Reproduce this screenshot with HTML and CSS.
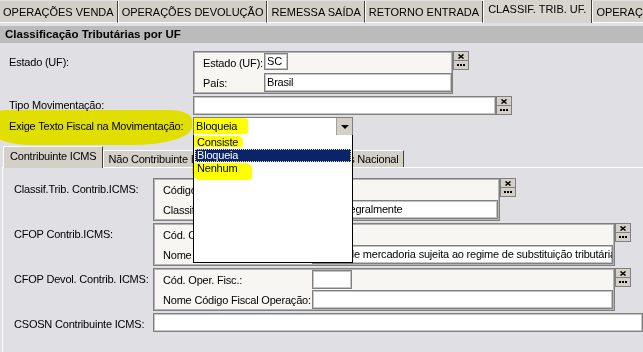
FILE: index.html
```html
<!DOCTYPE html>
<html lang="pt-BR">
<head>
  <meta charset="UTF-8">
  <title>Classificação Tributárias por UF</title>
  <link rel="stylesheet" href="styles.css">
</head>
<body>

  <div class="top-tabs">
    <div class="ttab first">OPERAÇÕES VENDA</div>
    <div class="ttab">OPERAÇÕES DEVOLUÇÃO</div>
    <div class="ttab">REMESSA SAÍDA</div>
    <div class="ttab">RETORNO ENTRADA</div>
    <div class="ttab active">CLASSIF. TRIB. UF.</div>
    <div class="ttab">OPERAÇÕES ESPECIAIS</div>
  </div>

  <div class="section-title">Classificação Tributárias por UF</div>

  <div class="form">
    <div class="row">
      <div class="lbl lbl-box">Estado (UF):</div>
      <div class="gbox gbox-uf">
        <span class="glbl">Estado (UF):</span><div class="fld fld-sc">SC</div>
        <span class="glbl">País:</span><div class="fld">Brasil</div>
      </div>
      <div class="btns">
        <div class="btn"><svg width="6" height="5" viewBox="0 0 6 5"><path d="M0.5 0.5L5.5 4.5M5.5 0.5L0.5 4.5" stroke="#000" stroke-width="1.5"/></svg></div>
        <div class="btn"><svg width="8" height="2" viewBox="0 0 8 2"><rect width="2" height="2"/><rect x="3" width="2" height="2"/><rect x="6" width="2" height="2"/></svg></div>
      </div>
    </div>

    <div class="row">
      <div class="lbl">Tipo Movimentação:</div>
      <div class="fld fld-tipo"></div>
      <div class="btns">
        <div class="btn"><svg width="6" height="5" viewBox="0 0 6 5"><path d="M0.5 0.5L5.5 4.5M5.5 0.5L0.5 4.5" stroke="#000" stroke-width="1.5"/></svg></div>
        <div class="btn"><svg width="8" height="2" viewBox="0 0 8 2"><rect width="2" height="2"/><rect x="3" width="2" height="2"/><rect x="6" width="2" height="2"/></svg></div>
      </div>
    </div>

    <div class="row">
      <div class="lbl">Exige Texto Fiscal na Movimentação:</div>
      <div class="combo">
        <span class="combo-text">Bloqueia</span>
        <span class="combo-arrow"><svg width="8" height="4" viewBox="0 0 8 4"><path d="M0 0H8L4 4Z"/></svg></span>
      </div>
    </div>
  </div>

  <div class="subtabs">
    <div class="stab active">Contribuinte ICMS</div>
    <div class="stab">Não Contribuinte ICMS</div>
    <div class="stab">Contribuinte ICMS Simples Nacional</div>
  </div>

  <div class="panel">
    <div class="row">
      <div class="lbl lbl-sub">Classif.Trib. Contrib.ICMS:</div>
      <div class="gbox gbox-a">
        <span class="glbl">Código:</span><div class="fld fld-cod"></div>
        <span class="glbl">Classificação Tributária:</span><div class="fld">Trib. integralmente</div>
      </div>
      <div class="btns">
        <div class="btn"><svg width="6" height="5" viewBox="0 0 6 5"><path d="M0.5 0.5L5.5 4.5M5.5 0.5L0.5 4.5" stroke="#000" stroke-width="1.5"/></svg></div>
        <div class="btn"><svg width="8" height="2" viewBox="0 0 8 2"><rect width="2" height="2"/><rect x="3" width="2" height="2"/><rect x="6" width="2" height="2"/></svg></div>
      </div>
    </div>

    <div class="row">
      <div class="lbl lbl-sub">CFOP Contrib.ICMS:</div>
      <div class="gbox gbox-wide">
        <span class="glbl">Cód. Oper. Fisc.:</span><div class="fld fld-cod">5405</div>
        <span class="glbl">Nome Código Fiscal Operação:</span><div class="fld">Venda de mercadoria sujeita ao regime de substituição tributária, na condição de contribuinte substituído</div>
      </div>
      <div class="btns">
        <div class="btn"><svg width="6" height="5" viewBox="0 0 6 5"><path d="M0.5 0.5L5.5 4.5M5.5 0.5L0.5 4.5" stroke="#000" stroke-width="1.5"/></svg></div>
        <div class="btn"><svg width="8" height="2" viewBox="0 0 8 2"><rect width="2" height="2"/><rect x="3" width="2" height="2"/><rect x="6" width="2" height="2"/></svg></div>
      </div>
    </div>

    <div class="row">
      <div class="lbl lbl-sub">CFOP Devol. Contrib. ICMS:</div>
      <div class="gbox gbox-wide">
        <span class="glbl">Cód. Oper. Fisc.:</span><div class="fld fld-cod"></div>
        <span class="glbl">Nome Código Fiscal Operação:</span><div class="fld"></div>
      </div>
      <div class="btns">
        <div class="btn"><svg width="6" height="5" viewBox="0 0 6 5"><path d="M0.5 0.5L5.5 4.5M5.5 0.5L0.5 4.5" stroke="#000" stroke-width="1.5"/></svg></div>
        <div class="btn"><svg width="8" height="2" viewBox="0 0 8 2"><rect width="2" height="2"/><rect x="3" width="2" height="2"/><rect x="6" width="2" height="2"/></svg></div>
      </div>
    </div>

    <div class="row">
      <div class="lbl lbl-sub">CSOSN Contribuinte ICMS:</div>
      <div class="fld fld-csosn"></div>
    </div>
  </div>

  <!-- open combo list -->
  <div class="drop-list">
    <div class="drop-item">Consiste</div>
    <div class="drop-item selected">Bloqueia</div>
    <div class="drop-item">Nenhum</div>
  </div>

  <!-- marker highlights -->
  <div class="marker marker-label"></div>
  <div class="marker marker-combo"></div>
  <div class="marker marker-consiste"></div>
  <div class="marker marker-nenhum"></div>

</body>
</html>
```

FILE: styles.css
```css
* {
  box-sizing: border-box;
}

body {
  margin: 0;
  width: 643px;
  height: 352px;
  overflow: hidden;
  position: relative;
  background: #e0dfe3;
  color: #000;
  font-family: "Liberation Sans", Arial, sans-serif;
  font-size: 11px;
  letter-spacing: -0.2px;
}

/* top tab strip */
.top-tabs {
  display: flex;
  align-items: flex-end;
  height: 23px;
  white-space: nowrap;
  overflow: hidden;
  letter-spacing: 0;
}

.ttab {
  flex: none;
  height: 22px;
  line-height: 22px;
  padding: 0 3px;
  background: #d4d0c8;
  border-left: 1px solid #fff;
  border-right: 1px solid #404040;
  border-bottom: 1px solid #fff;
}

.ttab.first {
  border-left: 0;
}

.ttab.active {
  height: 23px;
  line-height: 19px;
  padding: 0 5px 0 4px;
  background: #d8d5cf;
  border-bottom: 0;
}

.section-title {
  margin-top: 3px;
  height: 17px;
  line-height: 17px;
  padding-left: 5px;
  background: #bbbbbb;
  font-weight: bold;
  font-size: 11.5px;
  letter-spacing: 0;
}

.form {
  padding-top: 8px;
}

.row {
  display: flex;
  align-items: flex-start;
  margin-bottom: 2px;
}

.lbl {
  flex: none;
  width: 193px;
  padding-left: 9px;
  line-height: 19px;
  white-space: nowrap;
}

.lbl-box {
  padding-top: 2px;
}

.lbl-sub {
  width: 150px;
  padding-left: 11px;
  padding-top: 2px;
}

/* group boxes */
.gbox {
  flex: none;
  display: grid;
  grid-auto-rows: 19px;
  row-gap: 1px;
  align-items: center;
  padding: 1px 0 1px 9px;
  background: #f7f6f2;
  border: 1px solid #808080;
  box-shadow: inset 0 0 0 1px #b4b4b4;
}

.gbox-uf {
  width: 260px;
  grid-template-columns: 61px 1fr;
}

.gbox-a {
  width: 347px;
  grid-template-columns: 149px 1fr;
  padding-right: 1px;
}

.gbox-wide {
  width: 462px;
  grid-template-columns: 149px 1fr;
  padding-right: 1px;
}

.glbl {
  white-space: nowrap;
}

.fld {
  height: 19px;
  line-height: 17px;
  padding-left: 2px;
  background: #fff;
  border: 1px solid #808080;
  box-shadow: inset 0 0 0 1px #c4c4c4;
  white-space: nowrap;
  overflow: hidden;
}

.fld-sc {
  width: 24px;
  height: 17px;
  line-height: 15px;
  align-self: start;
}

.fld-cod {
  width: 40px;
}

.fld-tipo {
  width: 303px;
}

.fld-csosn {
  width: 500px;
}

/* lookup buttons */
.btns {
  flex: none;
  display: flex;
  flex-direction: column;
  width: 16px;
}

.btn {
  height: 10px;
  display: flex;
  align-items: center;
  justify-content: center;
  background: #d4d0c8;
  border: 1px solid #808080;
}

.btn + .btn {
  margin-top: -1px;
}

/* combo */
.combo {
  display: flex;
  width: 160px;
  height: 19px;
  background: #fff;
  border: 1px solid #808080;
}

.combo-text {
  flex: 1;
  padding-left: 2px;
  line-height: 17px;
}

.combo-arrow {
  width: 16px;
  display: flex;
  align-items: center;
  justify-content: center;
  background: #d4d0c8;
  border-left: 1px solid #a0a0a0;
}

/* inner tab strip */
.subtabs {
  display: flex;
  align-items: flex-end;
  height: 21px;
  margin: 10px 0 0 3px;
  white-space: nowrap;
}

.stab {
  flex: none;
  height: 17px;
  line-height: 17px;
  padding: 0 4px;
  background: #d4d0c8;
  border-left: 1px solid #fff;
  border-top: 1px solid #fff;
  border-right: 1px solid #404040;
}

.stab.active {
  height: 22px;
  line-height: 18px;
  margin-bottom: -1px;
  padding: 0 6px;
  position: relative;
}

.panel {
  margin-left: 2px;
  padding-top: 10px;
  height: 200px;
  border-left: 1px solid #fff;
  border-top: 1px solid #fff;
}

/* open dropdown */
.drop-list {
  position: absolute;
  left: 193px;
  top: 135px;
  width: 160px;
  height: 128px;
  padding: 0 1px;
  background: #fff;
  border: 1px solid #000;
  border-top: 0;
}

.drop-item {
  height: 13px;
  line-height: 13px;
  padding-left: 2px;
  margin-top: 0;
}

.drop-item:first-child {
  margin-top: 1px;
}

.drop-item.selected {
  background: #0a246a;
  color: #fff;
  outline: 1px dotted #e8e0a0;
  outline-offset: -1px;
}

/* yellow marker strokes */
.marker {
  position: absolute;
  background: #ffff00;
  mix-blend-mode: multiply;
  pointer-events: none;
}

.marker-label {
  left: -8px;
  top: 110px;
  width: 200px;
  height: 35px;
  border-radius: 14px 22px 60px 40px / 8px 10px 18px 14px;
}

.marker-combo {
  left: 193px;
  top: 118px;
  width: 55px;
  height: 16px;
  border-radius: 2px 4px 3px 2px;
}

.marker-consiste {
  left: 193px;
  top: 136px;
  width: 50px;
  height: 11px;
  border-radius: 2px 5px 3px 2px;
}

.marker-nenhum {
  left: 192px;
  top: 163px;
  width: 60px;
  height: 17px;
  border-radius: 2px 6px 4px 8px;
}
```
